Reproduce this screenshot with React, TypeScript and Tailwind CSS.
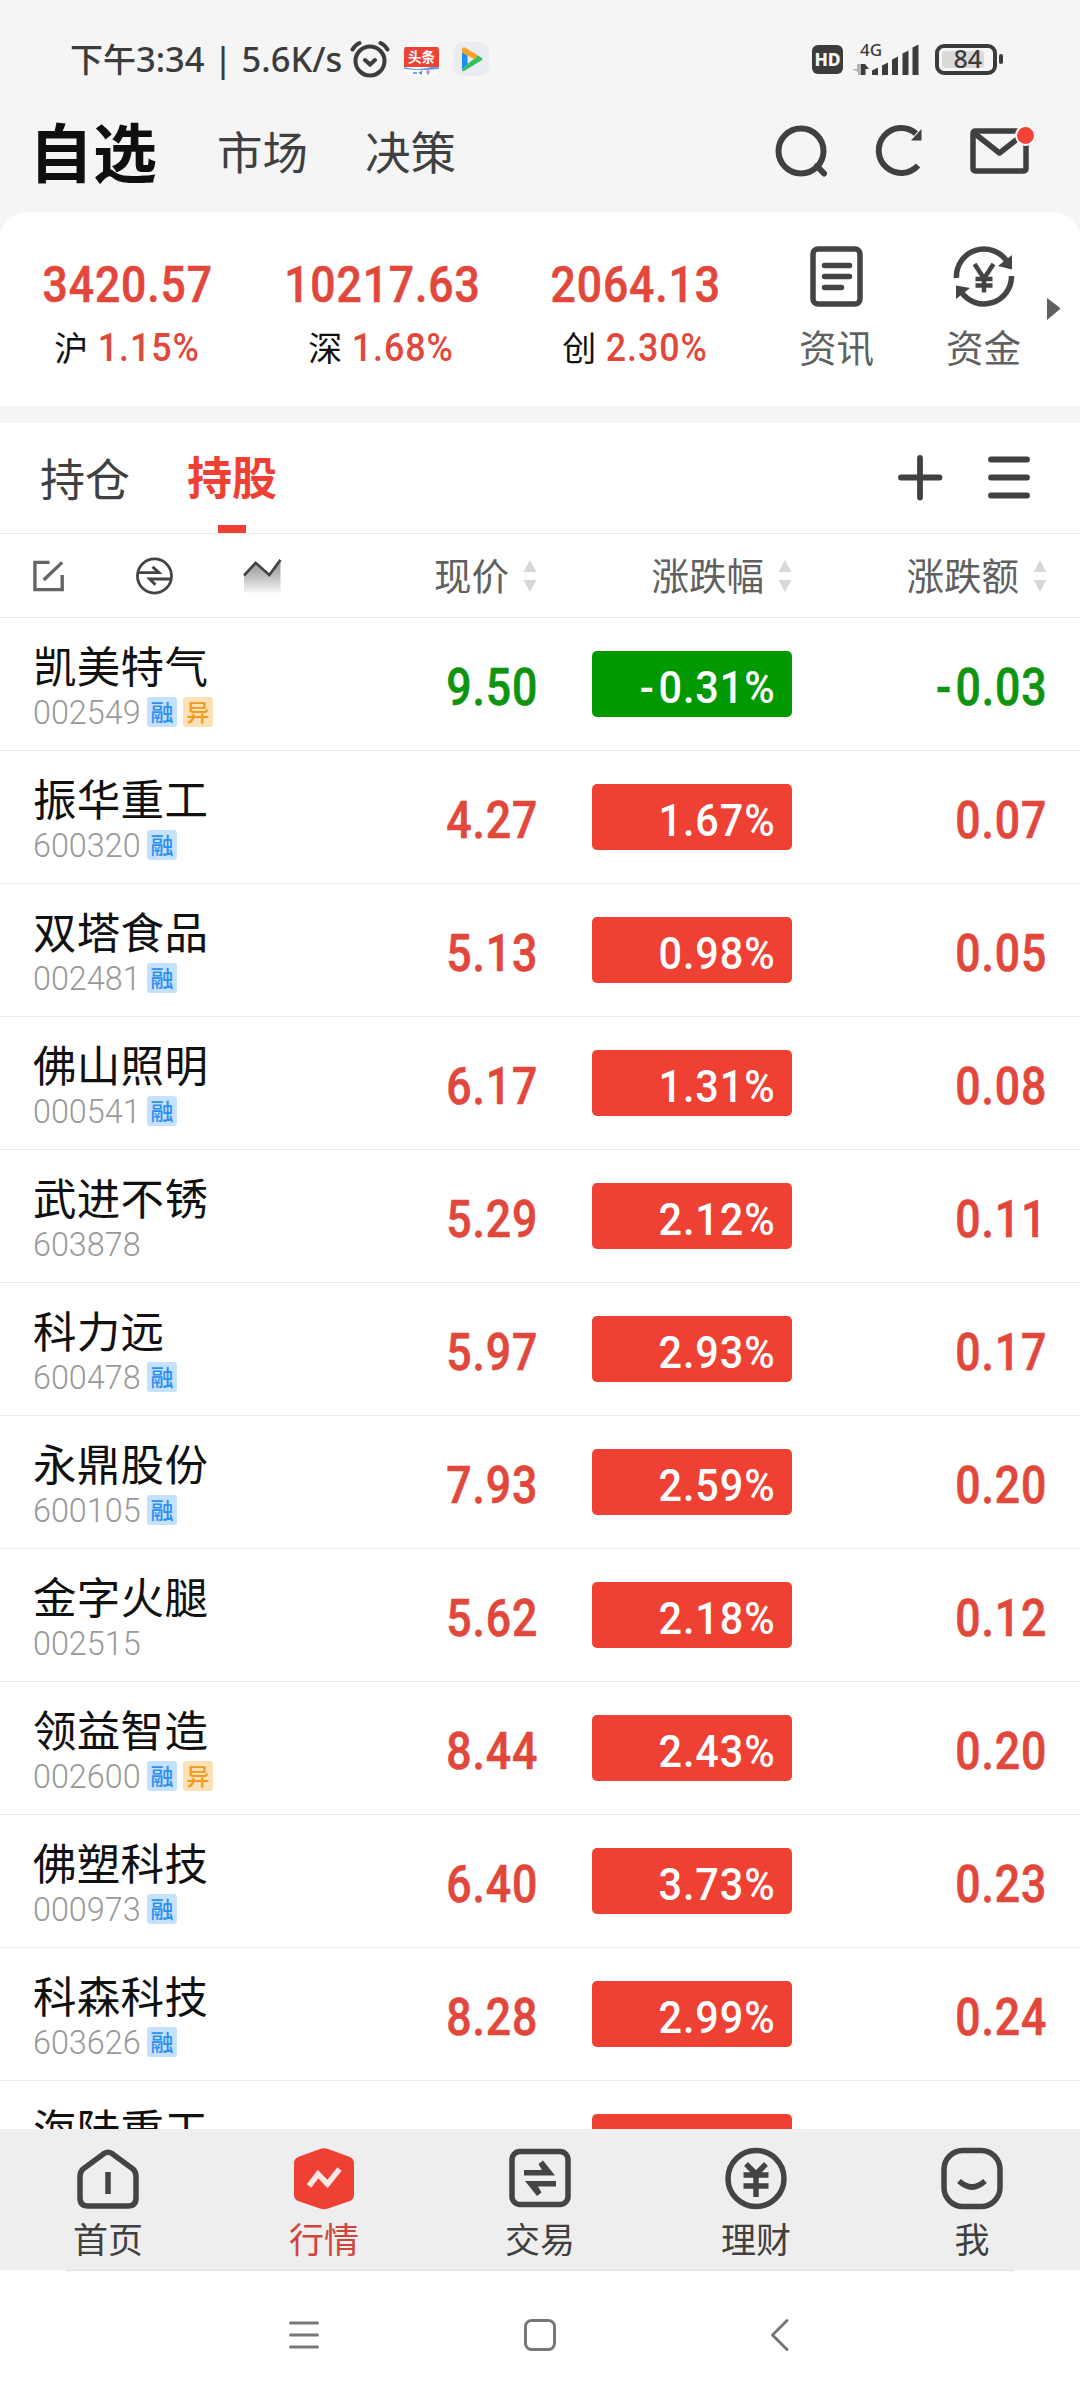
import type { ReactNode } from "react";

interface Stock {
  name: string;
  code: string;
  tags: string[];
  price: string;
  percent: string;
  change: string;
}

const STOCKS: Stock[] = [
  { name: "凯美特气", code: "002549", tags: ["融", "异"], price: "9.50", percent: "-0.31%", change: "-0.03" },
  { name: "振华重工", code: "600320", tags: ["融"], price: "4.27", percent: "1.67%", change: "0.07" },
  { name: "双塔食品", code: "002481", tags: ["融"], price: "5.13", percent: "0.98%", change: "0.05" },
  { name: "佛山照明", code: "000541", tags: ["融"], price: "6.17", percent: "1.31%", change: "0.08" },
  { name: "武进不锈", code: "603878", tags: [], price: "5.29", percent: "2.12%", change: "0.11" },
  { name: "科力远", code: "600478", tags: ["融"], price: "5.97", percent: "2.93%", change: "0.17" },
  { name: "永鼎股份", code: "600105", tags: ["融"], price: "7.93", percent: "2.59%", change: "0.20" },
  { name: "金字火腿", code: "002515", tags: [], price: "5.62", percent: "2.18%", change: "0.12" },
  { name: "领益智造", code: "002600", tags: ["融", "异"], price: "8.44", percent: "2.43%", change: "0.20" },
  { name: "佛塑科技", code: "000973", tags: ["融"], price: "6.40", percent: "3.73%", change: "0.23" },
  { name: "科森科技", code: "603626", tags: ["融"], price: "8.28", percent: "2.99%", change: "0.24" },
  { name: "海陆重工", code: "", tags: [], price: "", percent: "", change: "" },
];

const INDEXES = [
  { label: "沪", value: "3420.57", percent: "1.15%" },
  { label: "深", value: "10217.63", percent: "1.68%" },
  { label: "创", value: "2064.13", percent: "2.30%" },
];

function StatusBar() {
  return (
    <div className="flex h-[96px] items-start justify-between pl-[70px] pr-[77px] pt-[41px] text-[#3c3c3c]">
      <div className="flex h-[36px] items-center">
        <span className="w-[280px] whitespace-nowrap font-['Noto_Sans','Noto_Sans_CJK_SC',sans-serif] text-[34.5px] font-medium leading-[36px]">
          <span className="text-[33px]">下午</span>3:34 | 5.6K/s
        </span>
        {/* Alarm */}
        <svg className="h-[38px] w-[40px]" viewBox="0 0 40 38" fill="none" stroke="currentColor" strokeWidth={4} strokeLinecap="round">
          <circle cx="20" cy="21" r="14.5" />
          <path d="M15 20l5 4.500 5-4.500M2.500 9.500Q5 5 9.500 3M37.500 9.500Q35 5 30.500 3" />
        </svg>
        {/* News app */}
        <span className="relative ml-[14px] flex h-[34px] w-[35px] flex-col items-center overflow-hidden rounded-[9px] bg-white">
          <span className="mt-[5px] h-[20px] w-full bg-[#ef4237] text-center font-['Noto_Sans_CJK_SC',sans-serif] text-[13.5px] font-bold leading-[19px] text-white">头条</span>
          <svg className="h-[9px] w-full" viewBox="0 0 35 9">
            <path d="M0 0Q17 5 35 -3V2Q18 4 0 2Z" fill="#5e9ce6" />
            <path d="M9 6h4M15 5l3 2M16 7l2-3" stroke="#4b8fe0" strokeWidth="1.500" />
            <path d="M22 5h4M24 3v5" stroke="#c07be0" strokeWidth="1.500" />
          </svg>
        </span>
        {/* Video app */}
        <svg className="ml-[15px] h-[34px] w-[35px]" viewBox="0 0 35 34">
          <rect width="35" height="34" rx="9" fill="#e9edf2" />
          <path d="M8 7l6 4v11l-6 6z" fill="#1c8ff0" />
          <path d="M8 28q0 2 3 .5L28 18q1-1 0-2l-5-3z" fill="#2fc25b" />
          <path d="M8 8q0-4 4-2l12 7.500-4 4.500L8 10.500z" fill="#f5a12c" />
          <path d="M13.500 13.500v7.500l6.500-4z" fill="#e9edf2" />
        </svg>
      </div>
      <div className="flex h-[36px] items-center">
        <span className="flex h-[29px] w-[31px] items-center justify-center rounded-[6px] bg-[#3c3c3c] font-['Noto_Sans',sans-serif] text-[17.5px] font-extrabold text-[#f5f5f5]">HD</span>
        <span className="relative ml-[9px] h-[34px] w-[68px]">
          <span className="absolute left-[8px] top-0 font-['Noto_Sans',sans-serif] text-[17px] font-medium leading-[16px]">4G</span>
          <svg className="h-[34px] w-[68px]" viewBox="0 0 68 34" fill="currentColor">
            <path d="M5 22h5v11h-4v-3L0 27h5z" fill="#b3b3b3" />
            <path d="M9 22h4l4 5h-3.500v6H9z" />
            <path d="M20 28.500l6-3V33h-6zM30 23.500l6-3V33h-6zM40 17.500l6-3V33h-6zM50.500 11.500l6-3V33h-6zM60.500 5.500l6-3V33h-6z" />
          </svg>
        </span>
        <span className="ml-[15px] flex h-[31px] w-[62px] items-center rounded-[9px] border-4 border-[#3c3c3c] pl-[3px]">
          <span className="flex h-[17px] w-[42px] items-center justify-end rounded-[3px] bg-[#d9d9d9] pr-[2px] font-['Noto_Sans',sans-serif] text-[25px] font-medium">84</span>
        </span>
        <span className="ml-[2px] h-[10px] w-[4px] rounded-[2px] bg-[#3c3c3c]" />
      </div>
    </div>
  );
}

function TopNav() {
  return (
    <div className="flex h-[116px] items-center pb-[7px] pl-[29px] pr-[50px] text-[#404040]">
      <h1 className="w-[188px] pb-[3px] text-[64px] font-bold text-[#0f0f0f]">自选</h1>
      <span className="w-[148px] pb-[1px] text-[45.5px]">市场</span>
      <span className="pb-[1px] text-[45.5px]">决策</span>
      <svg className="ml-auto h-[54px] w-[54px]" viewBox="0 0 54 54" fill="none" stroke="currentColor" strokeWidth={6}>
        <circle cx="27" cy="27" r="22.500" />
        <path d="M43 42l7 7.500" strokeLinecap="round" />
      </svg>
      <svg className="ml-[47px] h-[54px] w-[50px]" viewBox="0 0 50 54" fill="none" stroke="currentColor" strokeWidth={6}>
        <path d="M43 41.500A22.500 22.500 0 1 1 41 9.500" />
        <path d="M46.500 5v11.500H36z" fill="currentColor" stroke="none" />
      </svg>
      <div className="relative ml-[45px] h-[54px] w-[60px]">
        <svg className="h-[54px] w-[60px]" viewBox="0 0 60 54" fill="none" stroke="currentColor" strokeWidth={5.5} strokeLinejoin="round">
          <rect x="3" y="7" width="53" height="40" rx="2" />
          <path d="M4 9l25.500 20L55 9" />
        </svg>
        <span className="absolute left-[45px] top-[1px] size-[21px] rounded-full border-2 border-white bg-[#f44336]" />
      </div>
    </div>
  );
}

function Shortcut({ label, children }: { label: string; children: ReactNode }) {
  return (
    <div className="flex w-[147px] flex-col items-center pt-[32px]">
      {children}
      <span className="mt-[15px] text-[37.5px] leading-[46px] text-[#606060]">{label}</span>
    </div>
  );
}

function IndexPanel() {
  return (
    <div className="flex h-[194px] rounded-t-[27px] bg-white pl-[1px]">
      {INDEXES.map((item) => (
        <div key={item.label} className="flex w-[254px] flex-col items-center pt-[48px] text-[#e2473b]">
          <span className="scale-x-[0.89] font-['Roboto',sans-serif] text-[50px] font-medium leading-[50px] tracking-[1px] [-webkit-text-stroke:0.6px]">{item.value}</span>
          <div className="mt-[13px] flex items-center pl-[2px]">
            <span className="text-[34px] leading-[46px] text-[#111]">{item.label}</span>
            <span className="ml-[6px] scale-x-[0.93] pt-[2px] font-['Roboto',sans-serif] text-[38.500px] font-medium leading-[46px] tracking-[1px]">{item.percent}</span>
          </div>
        </div>
      ))}
      <Shortcut label="资讯">
        <svg className="h-[64px] w-[56px]" viewBox="0 0 56 64" fill="none" stroke="#444" strokeWidth={5.5} strokeLinecap="round">
          <rect x="4" y="5" width="47" height="55" rx="5" />
          <path d="M15.500 21.500h25M15.500 32.500h25M15.500 43.500h17" />
        </svg>
      </Shortcut>
      <Shortcut label="资金">
        <svg className="h-[64px] w-[64px]" viewBox="0 0 64 64" fill="none" stroke="#444" strokeWidth={5.5}>
          <path d="M4.500 34A27.500 27.500 0 0 1 55 17.500M59.500 32A27.500 27.500 0 0 1 9 47.500" />
          <path d="M60 11v14.500L46 22zM4 41.500V55L18 44z" fill="#444" stroke="none" />
          <path d="M22.500 20l9.500 14.500 9.500-14.500M32 33v15.500M23.500 35h17M23.500 41.500h17" strokeWidth={4.5} />
        </svg>
      </Shortcut>
      <svg className="ml-[-12px] mt-[85px] h-[24px] w-[16px]" viewBox="0 0 16 24" fill="#606060">
        <path d="M2 1l12 9q2 2 0 3L2 23z" />
      </svg>
    </div>
  );
}

function HoldingTabs() {
  return (
    <div className="flex h-[111px] items-center border-b border-[#ebebeb] pl-[40px] pr-[48px]">
      <span className="w-[147px] pb-[1px] text-[45px] text-[#404040]">持仓</span>
      <div className="flex h-full flex-col items-center pt-[4px]">
        <span className="text-[45px] font-bold leading-[98px] text-[#ef4034]">持股</span>
        <span className="h-[8px] w-[28px] bg-[#ef4034]" />
      </div>
      <svg className="ml-auto h-[46px] w-[46px]" viewBox="0 0 46 46" stroke="#404040" strokeWidth={5.8} strokeLinecap="round">
        <path d="M23 3v39.500M4 22.500h38.500" />
      </svg>
      <svg className="ml-[43px] h-[46px] w-[46px]" viewBox="0 0 46 46" stroke="#404040" strokeWidth={5.800} strokeLinecap="round">
        <path d="M5 4.500h36M5 22.500h36M5 40.500h36" />
      </svg>
    </div>
  );
}

function SortLabel({ text }: { text: string }) {
  return (
    <div className="flex w-[255px] items-center justify-end text-[37.500px] text-[#606060]">
      <span className="pb-[3px]">{text}</span>
      <svg className="ml-[14px] h-[34px] w-[14px]" viewBox="0 0 14 34" fill="#d8d8d8">
        <path d="M7 1l6.500 12H.5zM7 33L.5 21h13z" />
      </svg>
    </div>
  );
}

function TableHead() {
  return (
    <div className="flex h-[84px] items-center border-b border-[#ebebeb] pl-[32px]">
      <svg className="h-[34px] w-[34px]" viewBox="0 0 34 34" fill="none" stroke="#666" strokeWidth={3.5}>
        <path d="M18 3H3v28h28V16M12 21L31 3" />
      </svg>
      <svg className="ml-[70px] h-[40px] w-[40px]" viewBox="0 0 40 40" fill="none" stroke="#444" strokeWidth={2.800}>
        <circle cx="20" cy="20" r="17.500" />
        <path d="M3 16.500h21.500L18 10.500M37 23H15l6 6" strokeWidth={3} />
      </svg>
      <svg className="ml-[69px] h-[36px] w-[40px]" viewBox="0 0 40 36" fill="none">
        <defs>
          <linearGradient id="area" x1="0" y1="0" x2="0" y2="1">
            <stop offset="0.250" stopColor="#a6a6a6" />
            <stop offset="1" stopColor="#f4f4f4" />
          </linearGradient>
        </defs>
        <path d="M1 18L13 4.500l14 13L38.500 2v33H1z" fill="url(#area)" />
        <path d="M1 17.500L13 4.500l14 12.500L38.500 1.500" stroke="#444" strokeWidth={2.800} />
      </svg>
      <div className="ml-auto flex pr-[33px]">
        <SortLabel text="现价" />
        <SortLabel text="涨跌幅" />
        <SortLabel text="涨跌额" />
      </div>
    </div>
  );
}

function Tag({ text }: { text: string }) {
  const color = text === "融" ? "bg-[#c6e1fb] text-[#2b8ff2]" : "bg-[#fde0b5] text-[#ef9a1d]";
  return (
    <span className={`mr-[6px] flex size-[30px] items-center justify-center rounded-[3px] pb-[1px] text-[23px] font-medium leading-[29px] ${color}`}>{text}</span>
  );
}

// The minus sign needs a little more air than the digits
function Signed({ value }: { value: string }) {
  if (!value.startsWith("-")) return <>{value}</>;
  return (
    <>
      <span className="mr-[4px]">-</span>
      {value.slice(1)}
    </>
  );
}

function StockRow({ stock }: { stock: Stock }) {
  const down = stock.change.startsWith("-");
  const textColor = down ? "text-[#0f940f]" : "text-[#e2473b]";
  return (
    <li className="flex h-[133px] shrink-0 border-b border-[#ebebeb]">
      <div className="w-[300px] pl-[33px] pt-[22px]">
        <p className="text-[43.5px] leading-[50px] tracking-[0.3px] text-[#111]">{stock.name}</p>
        <div className="mt-[7px] flex h-[30px] items-center">
          {stock.code && (
            <span className="w-[114px] origin-left scale-x-[0.965] pt-[1px] font-['Roboto',sans-serif] text-[33.500px] font-light leading-[30px] text-[#999]">{stock.code}</span>
          )}
          {stock.tags.map((t) => (
            <Tag key={t} text={t} />
          ))}
        </div>
      </div>
      <div className={`w-[238px] pt-[44px] text-right ${textColor}`}>
        <span className="inline-block origin-right scale-x-[0.875] font-['Roboto',sans-serif] text-[51px] font-medium leading-[51px] tracking-[1px] [-webkit-text-stroke:0.6px]">{stock.price}</span>
      </div>
      <div className={`ml-[54px] mt-[33px] flex h-[66px] w-[200px] items-center justify-end rounded-[5px] pr-[16px] pt-[7px] text-white ${down ? "bg-[#009900]" : "bg-[#ef4034]"}`}>
        <span className="origin-right scale-x-[0.94] font-['Roboto',sans-serif] text-[44px] font-medium leading-[44px] tracking-[1px]">
          <Signed value={stock.percent} />
        </span>
      </div>
      <div className={`w-[255px] pt-[44px] text-right ${textColor}`}>
        <span className="inline-block origin-right scale-x-[0.875] font-['Roboto',sans-serif] text-[51px] font-medium leading-[51px] tracking-[1px] [-webkit-text-stroke:0.6px]">
          <Signed value={stock.change} />
        </span>
      </div>
    </li>
  );
}

function TabItem({ label, active, children }: { label: string; active?: boolean; children: ReactNode }) {
  return (
    <div className={`flex flex-1 flex-col items-center pt-[18px] ${active ? "text-[#cf443d]" : "text-[#404040]"}`}>
      <svg className="h-[64px] w-[64px]" viewBox="0 0 64 64" fill="none" stroke="#444" strokeWidth={5.5}>
        {children}
      </svg>
      <span className="mt-[4px] text-[35px] leading-[46px]">{label}</span>
    </div>
  );
}

function TabBar() {
  return (
    <div className="flex h-[141px] bg-[#eee]">
      <TabItem label="首页">
        <path d="M28 6.500q4-2.500 8 0L57 22q3 3 3 7v22q0 8-8 8H12q-8 0-8-8V29q0-4 3-7z" />
        <path d="M32 25v22" />
      </TabItem>
      <TabItem label="行情" active>
        <path d="M28 2q4-1.500 8 0l22 8q4 2 4 6v32q0 4-4 6l-22 7.500q-4 1.500-8 0L6 54q-4-2-4-6V16q0-4 4-6z" fill="#ef4034" stroke="none" />
        <path d="M17 39L26 27l9.500 10L47.500 22" stroke="#fde8e6" />
      </TabItem>
      <TabItem label="交易">
        <rect x="4" y="4.500" width="56" height="53" rx="8" />
        <path d="M16 23h18l-3.500-6 4.500-3.500L47 28.500H16zM48 39.500H30l3.500 6-4.500 3.500L17 34h31z" fill="#444" stroke="none" />
      </TabItem>
      <TabItem label="理财">
        <circle cx="32" cy="31.500" r="28" />
        <path d="M22 17l10 10 10-10M32 26v24M19.500 28h25M19.500 39h25" />
      </TabItem>
      <TabItem label="我">
        <rect x="4" y="3.500" width="56" height="56" rx="19" />
        <path d="M19 34q13 12 26 0" />
      </TabItem>
    </div>
  );
}

function SystemNav() {
  return (
    <div className="h-[130px] bg-white">
      <div className="mx-[66px] h-px bg-[#e2e2e2]" />
      <svg className="h-[129px] w-full" viewBox="0 0 1080 129" fill="none" stroke="#777" strokeWidth={3}>
        <path d="M290.500 52h27M290.500 64h27M290.500 76h27" strokeLinecap="round" />
        <rect x="525.500" y="49.500" width="29" height="29" rx="6" />
        <path d="M787 49.500L772.500 64 787 78.500" strokeLinecap="round" strokeLinejoin="round" />
      </svg>
    </div>
  );
}

export default function App() {
  return (
    <div className="flex h-[2400px] w-[1080px] flex-col overflow-hidden bg-[#f5f5f5] font-['Noto_Sans_CJK_SC',sans-serif]">
      <StatusBar />
      <TopNav />
      <IndexPanel />
      <div className="mt-[17px] flex min-h-0 flex-1 flex-col overflow-hidden bg-white">
        <HoldingTabs />
        <TableHead />
        <ul className="flex min-h-0 flex-1 flex-col overflow-hidden">
          {STOCKS.map((s) => (
            <StockRow key={s.name} stock={s} />
          ))}
        </ul>
      </div>
      <TabBar />
      <SystemNav />
    </div>
  );
}
